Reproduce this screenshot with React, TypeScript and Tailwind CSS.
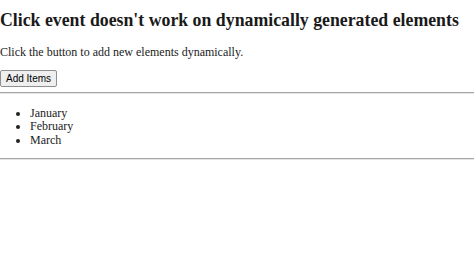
import React, { useState } from 'react';

const App: React.FC = () => {
  const [items, setItems] = useState<string[]>(['January', 'February', 'March']);

  const addItems = () => {
    setItems((prev) => [...prev, 'April']);
  };

  return (
    <div className="w-[474px] h-[261px] bg-white text-[#1a1a1a] font-['Liberation_Serif','Times_New_Roman',serif]">
      <h2 className="pt-[10px] text-[17.8px] leading-[20px] font-bold whitespace-nowrap">
        Click event doesn't work on dynamically generated elements
      </h2>
      <p className="mt-[15px] text-[12px] leading-[14px] text-[#222]">
        Click the button to add new elements dynamically.
      </p>
      <button
        onClick={addItems}
        className="mt-[11px] h-[17px] px-[5px] flex items-center border border-[#8f8f8f] bg-[#efefef] rounded-[2px] text-[10px] text-black font-['Liberation_Sans',Arial,sans-serif]"
      >
        Add Items
      </button>
      <div className="mt-[5px] h-[2px] border-t border-[#a6a6a6] border-b border-b-[#e4e4e4]" />
      <ul className="mt-[13px] pl-[30px] list-disc text-[12px] leading-[13.3px] text-[#222]">
        {items.map((item) => (
          <li key={item}>{item}</li>
        ))}
      </ul>
      <div className="mt-[11px] h-[2px] border-t border-[#a6a6a6] border-b border-b-[#e4e4e4]" />
    </div>
  );
};

export default App;
